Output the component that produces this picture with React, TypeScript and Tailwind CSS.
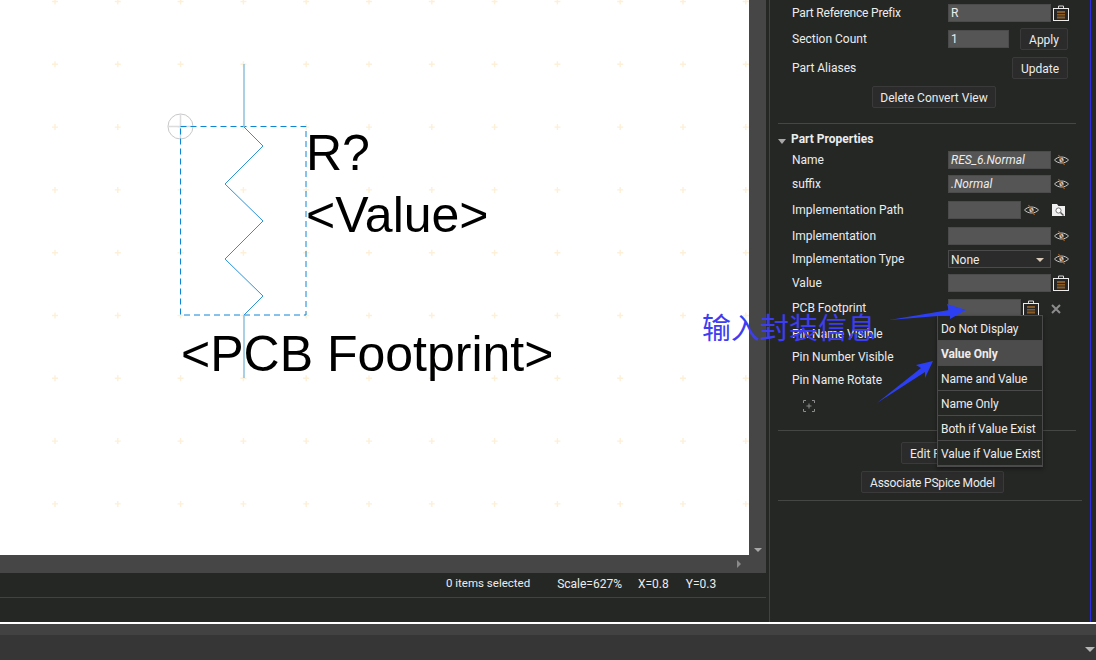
import type { ReactNode } from 'react';

const gridX = Array.from({ length: 12 }, (_, i) => 55 + i * 62.8);
const gridY = Array.from({ length: 9 }, (_, i) => 1.5 + i * 62.8);

function EyeIcon() {
  return (
    <svg width="15" height="12" viewBox="0 0 15 12" fill="none">
      <path d="M0.5 6 C4 2 11 2 14.500 6 C11 10 4 10 0.500 6 Z" stroke="#c8c8c8" strokeWidth="1" />
      <circle cx="7.500" cy="6" r="2.200" fill="#c8c8c8" />
      <path d="M4.500 1 L10.500 11" stroke="#a8621f" strokeWidth="1.200" />
    </svg>
  );
}

function BagIcon() {
  return (
    <svg width="16" height="16" viewBox="0 0 16 16" fill="none">
      <path d="M5.500 3 V1 H10.500 V3" stroke="#d8d8d8" strokeWidth="1" />
      <rect x="0.500" y="3.500" width="15" height="12" fill="#262626" stroke="#ececec" strokeWidth="1" />
      <rect x="4" y="6" width="8" height="7.500" fill="#8a5a24" />
      <path d="M4 8.500 H12 M4 11 H12" stroke="#2a2a2a" strokeWidth="1" />
    </svg>
  );
}

function SearchFolderIcon() {
  return (
    <svg width="14" height="13" viewBox="0 0 14 13" fill="none">
      <path d="M0 0 H5 L6.500 2 H13 V12 H0 Z" fill="#f0f0f0" />
      <circle cx="6.500" cy="6.500" r="2.600" fill="#fff" stroke="#777" strokeWidth="1" />
      <path d="M8.500 8.500 L11.500 11.500" stroke="#555" strokeWidth="1.400" />
    </svg>
  );
}

function Label({ children }: { children: ReactNode }) {
  return <span className="w-[177px] shrink-0 pl-[21px] text-[12px] leading-none whitespace-nowrap">{children}</span>;
}

function Field({ value, width = 'w-[103px]', italic = false }: { value?: string; width?: string; italic?: boolean }) {
  return (
    <div
      className={`h-[18px] ${width} shrink-0 border border-[#4b4b4b] bg-[#555555] px-[2px] text-[12px] leading-[17px] ${italic ? 'italic' : ''}`}
    >
      {value}
    </div>
  );
}

function Button({ children, className }: { children: ReactNode; className: string }) {
  return (
    <div className={`flex h-[22px] items-center justify-center rounded-[2px] border border-[#3a3a3a] bg-[#2a2b2a] pt-[1px] text-[12px] whitespace-nowrap ${className}`}>
      {children}
    </div>
  );
}

const menuItems = ['Do Not Display', 'Value Only', 'Name and Value', 'Name Only', 'Both if Value Exist', 'Value if Value Exist'];

export default function App() {
  return (
    <div className="relative h-[660px] w-[1096px] overflow-hidden bg-[#252725] font-['Roboto','Liberation_Sans',sans-serif] text-[#ececec]">
      <div className="flex h-[622px]">
        {/* editor column */}
        <div className="flex w-[769px] shrink-0 flex-col">
          <div className="flex h-[573px] w-[766px] flex-col bg-[#464646]">
            <div className="flex h-[555px]">
              <div className="relative h-[555px] w-[749px] overflow-hidden bg-white font-['Liberation_Sans',sans-serif] text-black">
                <svg width="749" height="555" className="absolute top-0 left-0">
                  {gridX.map((x) =>
                    gridY.map((y) => (
                      <path key={`${x}-${y}`} d={`M${x - 3} ${y} H${x + 3} M${x} ${y - 3} V${y + 3}`} stroke="#fdf0d8" strokeWidth="1.400" />
                    )),
                  )}
                  <circle cx="180.500" cy="126.500" r="12.500" fill="none" stroke="#c8c8c8" strokeWidth="1" />
                  <path d="M168 126.500 H193 M180.500 114 V139" stroke="#dcdcdc" strokeWidth="1.500" />
                  <rect x="180.500" y="126.500" width="125.500" height="188.500" fill="none" stroke="#0a86d8" strokeWidth="1" strokeDasharray="6 4" />
                  <path d="M244 64 V127 M244 315 V378" stroke="#8fc1de" strokeWidth="1.500" />
                  <path d="M244 127 L263 146 L225 184 L263 221 L225 259 L263 296 L244 315" fill="none" stroke="#2a93d8" strokeWidth="1" />
                </svg>
                <span className="absolute top-[124px] left-[306px] text-[50px] leading-[58px]">R?</span>
                <span className="absolute top-[186px] left-[306px] text-[50px] leading-[58px]">&lt;Value&gt;</span>
                <span className="absolute top-[325px] left-[181px] text-[50px] leading-[58px] whitespace-nowrap">&lt;PCB Footprint&gt;</span>
              </div>
              <div className="flex flex-1 flex-col items-center justify-end pb-[3px]">
                <div className="h-0 w-0 border-x-[4px] border-t-[4px] border-x-transparent border-t-[#a8a8a8]" />
              </div>
            </div>
            <div className="flex flex-1 items-center justify-end pr-[25px]">
              <div className="h-0 w-0 border-y-[4px] border-l-[4px] border-y-transparent border-l-[#8a8a8a]" />
            </div>
          </div>
          <div className="flex h-[25px] w-[766px] items-center border-b border-[#414341] pb-[3px] text-[12px]">
            <span className="ml-[446px] text-[11.5px]">0 items selected</span>
            <span className="ml-[27px]">Scale=627%</span>
            <span className="ml-[16px]">X=0.8</span>
            <span className="ml-[17px]">Y=0.3</span>
          </div>
        </div>

        {/* properties panel */}
        <div className="h-full w-[322px] shrink-0 border-r border-l border-r-[#2b2be0] border-l-[#414341] pt-[4px] pl-[1px]">
          <div className="flex h-[18px] items-center">
            <Label><span className="tracking-[-0.2px]">Part Reference Prefix</span></Label>
            <Field value="R" />
            <span className="ml-[2px]"><BagIcon /></span>
          </div>
          <div className="mt-[6px] flex h-[22px] items-center">
            <Label>Section Count</Label>
            <Field value="1" width="w-[61px]" />
            <Button className="ml-[11px] w-[48px]">Apply</Button>
          </div>
          <div className="mt-[7px] flex h-[22px] items-center">
            <Label>Part Aliases</Label>
            <Button className="ml-[64px] w-[56px]">Update</Button>
          </div>
          <div className="mt-[7px] flex justify-start pl-[101px]">
            <Button className="w-[124px]">Delete Convert View</Button>
          </div>
          <div className="mt-[15px] ml-[7px] h-px w-[298px] bg-[#454745]" />
          <div className="mt-[8px] flex h-[14px] items-center pl-[7px] text-[12px] font-bold">
            <div className="mt-[4px] mr-[5px] h-0 w-0 border-x-[4px] border-t-[5px] border-x-transparent border-t-[#a8a8a8]" />
            Part Properties
          </div>
          <div className="mt-[5px] flex h-[18px] items-center">
            <Label>Name</Label>
            <Field value="RES_6.Normal" italic />
            <span className="ml-[3px]"><EyeIcon /></span>
          </div>
          <div className="mt-[6px] flex h-[18px] items-center">
            <Label>suffix</Label>
            <Field value=".Normal" italic />
            <span className="ml-[3px]"><EyeIcon /></span>
          </div>
          <div className="mt-[8px] flex h-[18px] items-center">
            <Label>Implementation Path</Label>
            <Field width="w-[73px]" />
            <span className="ml-[3px]"><EyeIcon /></span>
            <span className="ml-[13px]"><SearchFolderIcon /></span>
          </div>
          <div className="mt-[8px] flex h-[18px] items-center">
            <Label>Implementation</Label>
            <Field />
            <span className="ml-[3px]"><EyeIcon /></span>
          </div>
          <div className="mt-[5px] flex h-[18px] items-center">
            <Label>Implementation Type</Label>
            <div className="flex h-[18px] w-[103px] items-center justify-between border border-[#4b4b4b] bg-[#2a2b2a] pt-[1px] pr-[6px] pl-[2px] text-[12px]">
              None
              <div className="h-0 w-0 border-x-[4px] border-t-[4px] border-x-transparent border-t-[#d9c9b8]" />
            </div>
            <span className="ml-[3px]"><EyeIcon /></span>
          </div>
          <div className="mt-[6px] flex h-[18px] items-center">
            <Label>Value</Label>
            <Field />
            <span className="ml-[2px]"><BagIcon /></span>
          </div>
          <div className="mt-[7px] flex h-[18px] items-center">
            <Label>PCB Footprint</Label>
            <Field width="w-[73px]" />
            <span className="ml-[2px]"><BagIcon /></span>
            <svg width="10" height="10" viewBox="0 0 10 10" className="mt-[2px] ml-[12px]" stroke="#8c8c8c" strokeWidth="2">
              <path d="M1 1 L9 9 M9 1 L1 9" />
            </svg>
          </div>
          <div className="mt-[8px] flex h-[18px] items-center"><Label>Pin Name Visible</Label></div>
          <div className="mt-[5px] flex h-[18px] items-center"><Label>Pin Number Visible</Label></div>
          <div className="mt-[5px] flex h-[18px] items-center"><Label>Pin Name Rotate</Label></div>
          <div className="mt-[11px] ml-[32px] flex h-[12px] items-center">
            <svg width="12" height="12" viewBox="0 0 12 12" fill="none" stroke="#8c8c8c" strokeWidth="1">
              <path d="M0.500 3 V0.500 H3 M9 0.500 H11.500 V3 M0.500 9 V11.500 H3 M9 11.500 H11.500 V9 M6 3.500 V8.500 M3.500 6 H8.500" />
            </svg>
          </div>
          <div className="mt-[18px] ml-[7px] h-px w-[298px] bg-[#454745]" />
          <div className="mt-[11px] pl-[130px]">
            <Button className="w-[120px] !justify-start pl-[8px]">Edit Part</Button>
          </div>
          <div className="mt-[7px] pl-[90px]">
            <Button className="w-[143px] tracking-[-0.2px]">Associate PSpice Model</Button>
          </div>
          <div className="mt-[7px] ml-[7px] h-px w-[304px] bg-[#454745]" />
        </div>
      </div>

      <div className="h-[2px] bg-white" />
      <div className="h-[11px] bg-[#424242]" />
      <div className="flex h-[25px] justify-end bg-[#363636] pt-[12px] pr-[1px]">
        <div className="h-0 w-0 border-x-[5px] border-t-[5px] border-x-transparent border-t-[#b5b5b5]" />
      </div>

      {/* dropdown open over the panel */}
      <div className="absolute top-[315px] left-[937px] w-[106px] border border-[#4a4a4a] bg-[#252725] text-[12px] tracking-[-0.1px] shadow-[0_2px_4px_rgba(0,0,0,0.4)]">
        {menuItems.map((item) => (
          <div
            key={item}
            className={`flex h-[25px] items-center border-b border-[#4a4a4a] pt-[1px] pl-[3px] whitespace-nowrap ${item === 'Value Only' ? 'bg-[#4c4c4c] font-bold' : ''}`}
          >
            {item}
          </div>
        ))}
      </div>

      {/* annotation drawn over the screenshot */}
      <span className="absolute top-[305px] left-[702px] font-['Noto_Sans_CJK_SC',sans-serif] text-[29px] leading-[42px] whitespace-nowrap text-[#3d3df2]">
        输入封装信息
      </span>
      <svg width="1096" height="660" className="pointer-events-none absolute top-0 left-0">
        <polygon points="889,320 949,310 947,304 966,310 950,319 950,315" fill="#2c3ff5" />
        <polygon points="877,403 921,368 916,365 933,361 925,378 925,372" fill="#2c3ff5" />
      </svg>
    </div>
  );
}
